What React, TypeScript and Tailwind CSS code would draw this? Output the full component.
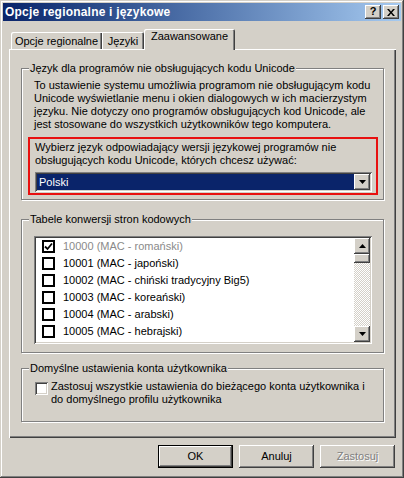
import type { ReactNode } from "react";

const raised =
  "shadow-[inset_-1px_-1px_#404040,inset_1px_1px_#ffffff,inset_-2px_-2px_#808080,inset_2px_2px_#d4d0c8]";
const sunken =
  "shadow-[inset_1px_1px_#808080,inset_-1px_-1px_#ffffff,inset_2px_2px_#404040,inset_-2px_-2px_#d4d0c8]";
const etched = "border border-[#808080] shadow-[1px_1px_0_#ffffff,inset_1px_1px_0_#ffffff]";

function Arrow({ up }: { up?: boolean }) {
  return (
    <svg width="7" height="4" viewBox="0 0 7 4">
      <polygon points={up ? "3.5,0 7,4 0,4" : "0,0 7,0 3.5,4"} fill="#000" />
    </svg>
  );
}

function Group({ title, className, children }: { title: string; className: string; children?: ReactNode }) {
  return (
    <div className={`relative ${etched} ${className}`}>
      <span className="absolute left-[7px] -top-[7px] bg-[#d4d0c8] px-[1px] leading-[13px] whitespace-nowrap">
        {title}
      </span>
      {children}
    </div>
  );
}

const codePages = [
  "10000 (MAC - romański)",
  "10001 (MAC - japoński)",
  "10002 (MAC - chiński tradycyjny Big5)",
  "10003 (MAC - koreański)",
  "10004 (MAC - arabski)",
  "10005 (MAC - hebrajski)",
];

export default function App() {
  return (
    <div
      className={`w-[404px] h-[478px] bg-[#d4d0c8] p-[3px] flex flex-col text-[11px] leading-[13px] text-black font-['Liberation_Sans',Arial,sans-serif] shadow-[inset_-1px_-1px_#404040,inset_1px_1px_#d4d0c8,inset_-2px_-2px_#808080,inset_2px_2px_#ffffff]`}
    >
      {/* title bar */}
      <div className="h-[18px] flex items-center pl-[2px] pr-[2px] bg-linear-to-r from-[#0a246a] to-[#a6caf0]">
        <span className="text-white font-bold text-[12px] tracking-[0.2px]">Opcje regionalne i językowe</span>
        <div className="ml-auto flex gap-[2px]">
          <div className={`w-[16px] h-[14px] bg-[#d4d0c8] ${raised} flex items-center justify-center font-bold text-[11px] leading-[11px] pb-[1px]`}>
            ?
          </div>
          <div className={`w-[16px] h-[14px] bg-[#d4d0c8] ${raised} flex items-center justify-center`}>
            <svg width="8" height="7" viewBox="0 0 8 7">
              <path d="M0 0h2l2 2.5L6 0h2L5 3.5 8 7H6L4 4.5 2 7H0l3-3.5z" fill="#000" />
            </svg>
          </div>
        </div>
      </div>

      {/* tabs */}
      <div className="mt-[8px] ml-[6px] pl-[2px] h-[21px] -mb-[1px] relative z-10 flex items-end">
        <div className="w-[91px] h-[17px] mb-[1px] pt-[3px] text-center rounded-tl-[2px] shadow-[inset_1px_1px_#ffffff,inset_-1px_0_#404040,inset_-2px_0_#808080]">
          Opcje regionalne
        </div>
        <div className="w-[42px] h-[17px] mb-[1px] pt-[3px] text-center rounded-tr-[2px] shadow-[inset_1px_1px_#ffffff,inset_-1px_0_#404040,inset_-2px_0_#808080]">
          Języki
        </div>
        <div className="w-[91px] h-[21px] pt-[1px] bg-[#d4d0c8] text-center rounded-t-[2px] shadow-[inset_1px_1px_#ffffff,inset_-1px_0_#404040,inset_-2px_0_#808080]">
          Zaawansowane
        </div>
      </div>

      {/* panel */}
      <div className="ml-[6px] mr-[5px] h-[389px] pt-[19px] px-[12px] flex flex-col shadow-[inset_1px_1px_#ffffff,inset_-1px_-1px_#404040,inset_-2px_-2px_#808080]">
        <Group title="Język dla programów nie obsługujących kodu Unicode" className="h-[132px] pt-[10px]">
          <div className="pl-[12px] whitespace-nowrap">
            <div>To ustawienie systemu umożliwia programom nie obsługującym kodu</div>
            <div>Unicode wyświetlanie menu i okien dialogowych w ich macierzystym</div>
            <div>języku. Nie dotyczy ono programów obsługujących kod Unicode, ale</div>
            <div>jest stosowane do wszystkich użytkowników tego komputera.</div>
          </div>
          <div className="mt-[6px] ml-[6px] mr-[5px] border-2 border-[#e81010] pt-[2px] pb-[1px] pl-[5px] pr-[4px]">
            <div className="whitespace-nowrap">
              <div>Wybierz język odpowiadający wersji językowej programów nie</div>
              <div>obsługujących kodu Unicode, których chcesz używać:</div>
            </div>
            <div className={`mt-[5px] h-[20px] bg-white ${sunken} p-[2px] flex`}>
              <div className="flex-1 bg-[#0a246a] text-white pl-[2px] leading-[16px]">Polski</div>
              <div className={`w-[16px] bg-[#d4d0c8] ${raised} flex items-center justify-center`}>
                <Arrow />
              </div>
            </div>
          </div>
        </Group>

        <Group title="Tabele konwersji stron kodowych" className="mt-[19px] h-[134px] pt-[16px] pl-[12px]">
          <div className={`w-[338px] h-[108px] bg-white ${sunken} p-[2px] flex`}>
            <div className="flex-1 flex flex-col">
              {codePages.map((cp, i) => (
                <div key={cp} className="h-[17px] flex items-center pl-[6px] whitespace-nowrap">
                  <div className="w-[13px] h-[13px] border-2 border-black bg-white flex items-center justify-center">
                    {i === 0 && (
                      <svg width="9" height="9" viewBox="0 0 9 9">
                        <path d="M1 4.5l2.5 2.5L8 1.5" stroke="#000" strokeWidth="1.8" fill="none" />
                      </svg>
                    )}
                  </div>
                  <span className={`ml-[8px] ${i === 0 ? "text-[#8a8a8a]" : ""}`}>{cp}</span>
                </div>
              ))}
            </div>
            <div className="w-[16px] flex flex-col">
              <div className={`h-[16px] bg-[#d4d0c8] ${raised} flex items-center justify-center`}>
                <Arrow up />
              </div>
              <div className={`h-[9px] bg-[#d4d0c8] ${raised}`} />
              <div className="flex-1 bg-[image:repeating-conic-gradient(#ffffff_0_25%,#d4d0c8_0_50%)] bg-[length:2px_2px]" />
              <div className={`h-[16px] bg-[#d4d0c8] ${raised} flex items-center justify-center`}>
                <Arrow />
              </div>
            </div>
          </div>
        </Group>

        <Group title="Domyślne ustawienia konta użytkownika" className="mt-[15px] h-[54px] pt-[11px] pl-[13px]">
          <div className="flex items-start">
            <div className={`mt-[2px] w-[13px] h-[13px] bg-white ${sunken}`} />
            <div className="ml-[3px] whitespace-nowrap">
              <div>Zastosuj wszystkie ustawienia do bieżącego konta użytkownika i</div>
              <div>do domyślnego profilu użytkownika</div>
            </div>
          </div>
        </Group>
      </div>

      {/* buttons */}
      <div className="mt-[7px] mr-[6px] flex justify-end gap-[6px]">
        <div className="w-[75px] h-[23px] border border-black">
          <div className={`h-full ${raised} flex items-center justify-center`}>OK</div>
        </div>
        <div className={`w-[75px] h-[23px] ${raised} flex items-center justify-center`}>Anuluj</div>
        <div className={`w-[75px] h-[23px] ${raised} flex items-center justify-center text-[#808080] [text-shadow:1px_1px_#ffffff]`}>
          Zastosuj
        </div>
      </div>
    </div>
  );
}
